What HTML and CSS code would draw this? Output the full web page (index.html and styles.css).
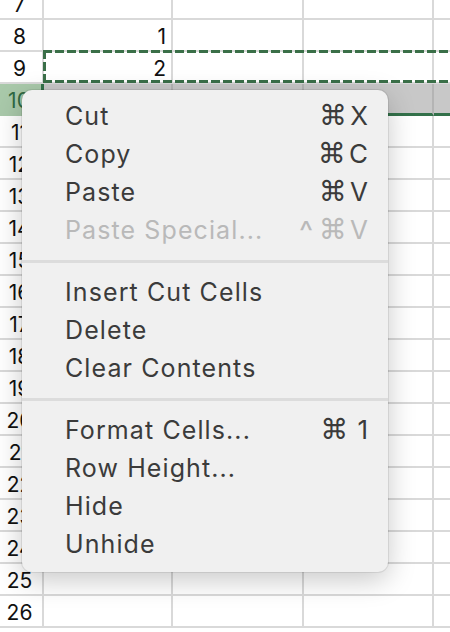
FILE: index.html
```html
<!DOCTYPE html>
<html>
<head>
<meta charset="utf-8">
<link rel="stylesheet" href="styles.css">
</head>
<body>
<div class="sheet">
  <div class="row"><div class="hdr">7</div><div class="cell a"></div><div class="cell b"></div><div class="cell c"></div><div class="cell d"></div></div>
  <div class="row"><div class="hdr">8</div><div class="cell a">1</div><div class="cell b"></div><div class="cell c"></div><div class="cell d"></div></div>
  <div class="row"><div class="hdr">9</div><div class="cell a">2</div><div class="cell b"></div><div class="cell c"></div><div class="cell d"></div></div>
  <div class="row sel"><div class="hdr">10</div><div class="cell a"></div><div class="cell b"></div><div class="cell c"></div><div class="cell d"></div></div>
  <div class="row"><div class="hdr">11</div><div class="cell a"></div><div class="cell b"></div><div class="cell c"></div><div class="cell d"></div></div>
  <div class="row"><div class="hdr">12</div><div class="cell a"></div><div class="cell b"></div><div class="cell c"></div><div class="cell d"></div></div>
  <div class="row"><div class="hdr">13</div><div class="cell a"></div><div class="cell b"></div><div class="cell c"></div><div class="cell d"></div></div>
  <div class="row"><div class="hdr">14</div><div class="cell a"></div><div class="cell b"></div><div class="cell c"></div><div class="cell d"></div></div>
  <div class="row"><div class="hdr">15</div><div class="cell a"></div><div class="cell b"></div><div class="cell c"></div><div class="cell d"></div></div>
  <div class="row"><div class="hdr">16</div><div class="cell a"></div><div class="cell b"></div><div class="cell c"></div><div class="cell d"></div></div>
  <div class="row"><div class="hdr">17</div><div class="cell a"></div><div class="cell b"></div><div class="cell c"></div><div class="cell d"></div></div>
  <div class="row"><div class="hdr">18</div><div class="cell a"></div><div class="cell b"></div><div class="cell c"></div><div class="cell d"></div></div>
  <div class="row"><div class="hdr">19</div><div class="cell a"></div><div class="cell b"></div><div class="cell c"></div><div class="cell d"></div></div>
  <div class="row"><div class="hdr">20</div><div class="cell a"></div><div class="cell b"></div><div class="cell c"></div><div class="cell d"></div></div>
  <div class="row"><div class="hdr">21</div><div class="cell a"></div><div class="cell b"></div><div class="cell c"></div><div class="cell d"></div></div>
  <div class="row"><div class="hdr">22</div><div class="cell a"></div><div class="cell b"></div><div class="cell c"></div><div class="cell d"></div></div>
  <div class="row"><div class="hdr">23</div><div class="cell a"></div><div class="cell b"></div><div class="cell c"></div><div class="cell d"></div></div>
  <div class="row"><div class="hdr">24</div><div class="cell a"></div><div class="cell b"></div><div class="cell c"></div><div class="cell d"></div></div>
  <div class="row"><div class="hdr">25</div><div class="cell a"></div><div class="cell b"></div><div class="cell c"></div><div class="cell d"></div></div>
  <div class="row"><div class="hdr">26</div><div class="cell a"></div><div class="cell b"></div><div class="cell c"></div><div class="cell d"></div></div>

  <div class="ants">
    <div class="ants-top"></div>
    <div class="ants-left"></div>
    <div class="ants-bottom"></div>
  </div>

  <div class="menu">
    <div class="item"><span>Cut</span><span class="key"><span class="cmd">⌘</span>X</span></div>
    <div class="item"><span>Copy</span><span class="key"><span class="cmd">⌘</span>C</span></div>
    <div class="item"><span>Paste</span><span class="key"><span class="cmd">⌘</span>V</span></div>
    <div class="item disabled"><span>Paste Special...</span><span class="key"><span class="ctl">^</span><span class="cmd">⌘</span>V</span></div>
    <div class="sep"></div>
    <div class="item"><span>Insert Cut Cells</span></div>
    <div class="item"><span>Delete</span></div>
    <div class="item"><span>Clear Contents</span></div>
    <div class="sep"></div>
    <div class="item"><span>Format Cells...</span><span class="key"><span class="cmd">⌘</span><span class="one">1</span></span></div>
    <div class="item"><span>Row Height...</span></div>
    <div class="item"><span>Hide</span></div>
    <div class="item"><span>Unhide</span></div>
  </div>
</div>
</body>
</html>
```

FILE: styles.css
```css
html, body {
  margin: 0;
  padding: 0;
  background: #ffffff;
  overflow: hidden;
}

.sheet {
  position: relative;
  margin-top: -12px;
  font-family: Inter, "Liberation Sans", sans-serif;
  color: #111;
}

.row {
  display: flex;
  height: 32px;
}

.row > div {
  box-sizing: border-box;
  height: 32px;
  border-bottom: 2px solid #d9d9d9;
  border-right: 2px solid #d9d9d9;
  font-size: 21px;
  line-height: 30px;
  padding-top: 2px;
}

.hdr {
  width: 44px;
  flex: none;
  text-align: center;
  padding-right: 3px;
  background: #fff;
}

.cell.a { width: 129px; flex: none; text-align: right; padding-right: 5px; }
.cell.b { width: 131px; flex: none; }
.cell.c { width: 130px; flex: none; }
.cell.d { flex: 1; border-right: none; }

.row.sel > div {
  background: #c8c8c8;
  border-bottom: 3px solid #33714a;
  border-right-color: #b4b4b4;
}
.row.sel > .hdr {
  background: #a9c9aa;
  color: #2f6a43;
  border-right: 3px solid #33714a;
  border-bottom-color: #a9c9aa;
}

.ants {
  position: absolute;
  left: 43px;
  right: 0;
  top: 62px;
  height: 33px;
}
.ants-top, .ants-bottom {
  position: absolute;
  left: 0;
  right: 0;
  height: 3px;
  background: repeating-linear-gradient(to right, #3a6f48 0 9px, transparent 9px 12px);
}
.ants-top { top: 0; }
.ants-bottom { bottom: 0; }
.ants-left {
  position: absolute;
  left: 0;
  top: 0;
  bottom: 0;
  width: 3px;
  background: repeating-linear-gradient(to bottom, #3a6f48 0 9px, transparent 9px 12px);
}

.menu {
  position: absolute;
  left: 22px;
  top: 102px;
  width: 366px;
  box-sizing: border-box;
  padding: 7px 20px 9px 0;
  background: #f0f0f0;
  border-radius: 10px;
  box-shadow: 0 0 0 1px rgba(0,0,0,0.08), 0 8px 28px rgba(0,0,0,0.22);
  font-family: Inter, "DejaVu Sans", sans-serif;
  color: #3b3b3b;
}

.item {
  display: flex;
  justify-content: space-between;
  align-items: center;
  height: 38px;
  padding-left: 43px;
  font-size: 25px;
  letter-spacing: 1.1px;
  line-height: 38px;
}
.item.disabled { color: #b9b9b9; }

.key {
  display: flex;
  align-items: center;
  gap: 3px;
  letter-spacing: 0;
  font-size: 26px;
}
.cmd {
  font-family: "DejaVu Sans", sans-serif;
  font-size: 28px;
}
.ctl {
  margin-right: 3px;
  font-size: 30px;
  position: relative;
  top: 1px;
}
.one { margin-left: 6px; }

.sep {
  height: 3px;
  background: #dcdcdc;
  margin: 11px -20px 10px 0;
}
```
